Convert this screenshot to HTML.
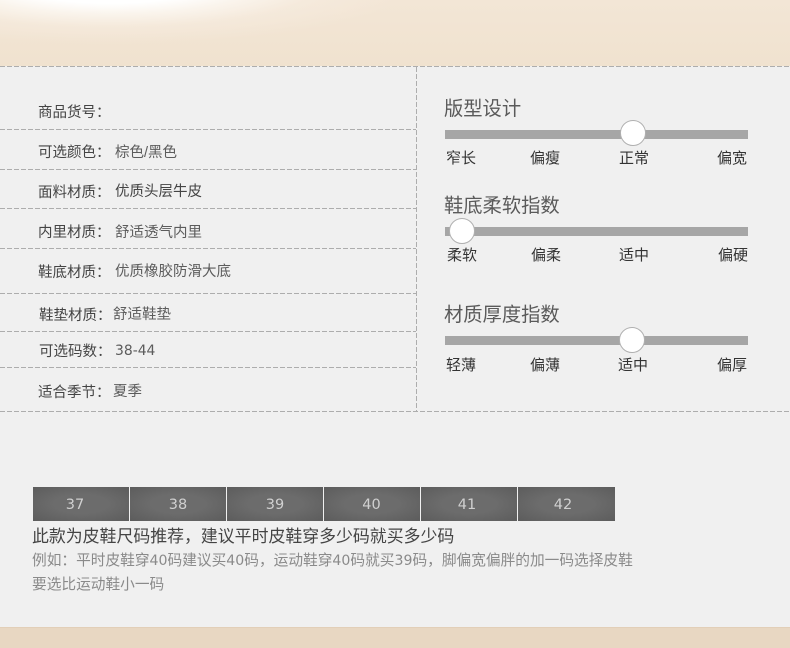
<!DOCTYPE html>
<html lang="zh">
<head>
<meta charset="utf-8">
<style>
html,body{margin:0;padding:0;}
body{width:790px;height:648px;overflow:hidden;position:relative;background:#f0f0f0;font-family:"Liberation Sans","Noto Sans CJK SC",sans-serif;}
.top{position:absolute;left:0;top:0;width:790px;height:66px;background:radial-gradient(ellipse 300px 58px at 110px -14px,#fff 0%,#fff 30%,rgba(251,246,239,.9) 48%,rgba(247,237,225,.55) 70%,rgba(243,229,212,0) 100%),linear-gradient(#f3e6d6,#f0e2cf);}
.bot{position:absolute;left:0;top:627px;width:790px;height:21px;background:#e8d7c2;border-top:1px solid #e2cfb8;box-sizing:border-box;}
.h{position:absolute;height:1px;background:repeating-linear-gradient(90deg,#adadad 0,#adadad 5px,transparent 5px,transparent 7px);}
.v{position:absolute;width:1px;background:repeating-linear-gradient(180deg,#adadad 0,#adadad 5px,transparent 5px,transparent 7px);}
.t{position:absolute;white-space:nowrap;font-size:14.5px;line-height:20px;color:#444;}
.t span{color:#5c5c5c;}
i{font-style:normal;font-family:"Noto Sans CJK TC",sans-serif;}
b{font-weight:normal;font-family:"DejaVu Sans",sans-serif;font-size:.96em;}
.title{position:absolute;white-space:nowrap;font-size:19.3px;line-height:26px;color:#5a5a5a;}
.lab{position:absolute;white-space:nowrap;font-size:15px;line-height:20px;color:#333;}
.track{position:absolute;left:445px;width:303px;height:9px;background:#a6a6a6;}
.knob{position:absolute;width:24px;height:24px;border-radius:50%;background:#fff;border:1px solid #b0b0b0;}
.sz{position:absolute;top:487px;width:96px;height:34px;background:radial-gradient(ellipse at center,#6c6c6c 40%,#5c5c5c 100%);color:#d0d0d0;font-family:"DejaVu Sans",sans-serif;font-size:14.5px;line-height:36px;text-align:center;}
.note{position:absolute;white-space:nowrap;left:32px;}
</style>
</head>
<body>
<div class="top"></div>
<div class="bot"></div>

<div class="h" style="left:0;top:66px;width:790px"></div>
<div class="h" style="left:0;top:129px;width:416px"></div>
<div class="h" style="left:0;top:169px;width:416px"></div>
<div class="h" style="left:0;top:208px;width:416px"></div>
<div class="h" style="left:0;top:248px;width:416px"></div>
<div class="h" style="left:0;top:293px;width:416px"></div>
<div class="h" style="left:0;top:331px;width:416px"></div>
<div class="h" style="left:0;top:367px;width:416px"></div>
<div class="h" style="left:0;top:411px;width:790px"></div>
<div class="v" style="left:416px;top:67px;height:344px"></div>

<div class="t" style="left:38px;top:102px">商品货号<i>：</i></div>
<div class="t" style="left:38px;top:142px">可选颜色<i>：</i></div><div class="t" style="left:115px;top:143px"><span>棕色/黑色</span></div>
<div class="t" style="left:38px;top:182px">面料材质<i>：</i></div><div class="t" style="left:115px;top:182px">优质头层牛皮</div>
<div class="t" style="left:38px;top:222px">内里材质<i>：</i></div><div class="t" style="left:115px;top:223px"><span>舒适透气内里</span></div>
<div class="t" style="left:38px;top:262px">鞋底材质<i>：</i></div><div class="t" style="left:115px;top:262px"><span>优质橡胶防滑大底</span></div>
<div class="t" style="left:39px;top:305px">鞋垫材质<i>：</i></div><div class="t" style="left:113px;top:305px"><span>舒适鞋垫</span></div>
<div class="t" style="left:39px;top:341px">可选码数<i>：</i></div><div class="t" style="left:115px;top:341px"><span><b>38-44</b></span></div>
<div class="t" style="left:38px;top:382px">适合季节<i>：</i></div><div class="t" style="left:113px;top:382px"><span>夏季</span></div>

<div class="title" style="left:444px;top:97px">版型设计</div>
<div class="track" style="top:130px"></div>
<div class="knob" style="left:620px;top:120px"></div>
<div class="lab" style="left:446px;top:149px">窄长</div>
<div class="lab" style="left:530px;top:149px">偏瘦</div>
<div class="lab" style="left:619px;top:149px">正常</div>
<div class="lab" style="left:717px;top:149px">偏宽</div>

<div class="title" style="left:444px;top:194px">鞋底柔软指数</div>
<div class="track" style="top:227px"></div>
<div class="knob" style="left:449px;top:218px"></div>
<div class="lab" style="left:447px;top:246px">柔软</div>
<div class="lab" style="left:531px;top:246px">偏柔</div>
<div class="lab" style="left:619px;top:246px">适中</div>
<div class="lab" style="left:718px;top:246px">偏硬</div>

<div class="title" style="left:444px;top:303px">材质厚度指数</div>
<div class="track" style="top:336px"></div>
<div class="knob" style="left:619px;top:327px"></div>
<div class="lab" style="left:446px;top:356px">轻薄</div>
<div class="lab" style="left:530px;top:356px">偏薄</div>
<div class="lab" style="left:618px;top:356px">适中</div>
<div class="lab" style="left:717px;top:356px">偏厚</div>

<div class="sz" style="left:33px;text-indent:-12px">37</div>
<div class="sz" style="left:130px">38</div>
<div class="sz" style="left:227px">39</div>
<div class="sz" style="left:324px;text-indent:-1px">40</div>
<div class="sz" style="left:421px;text-indent:-4px">41</div>
<div class="sz" style="left:518px;width:97px;text-indent:-7px">42</div>

<div class="note" style="top:525px;font-size:16.9px;line-height:20px;color:#444">此款为皮鞋尺码推荐<i>，</i>建议平时皮鞋穿多少码就买多少码</div>
<div class="note" style="top:550px;font-size:14.7px;line-height:20px;color:#8a8a8a">例如<i>：</i>平时皮鞋穿<b>40</b>码建议买<b>40</b>码<i>，</i>运动鞋穿<b>40</b>码就买<b>39</b>码<i>，</i>脚偏宽偏胖的加一码选择皮鞋</div>
<div class="note" style="top:575px;font-size:14.7px;line-height:20px;color:#8a8a8a">要选比运动鞋小一码</div>
</body>
</html>
